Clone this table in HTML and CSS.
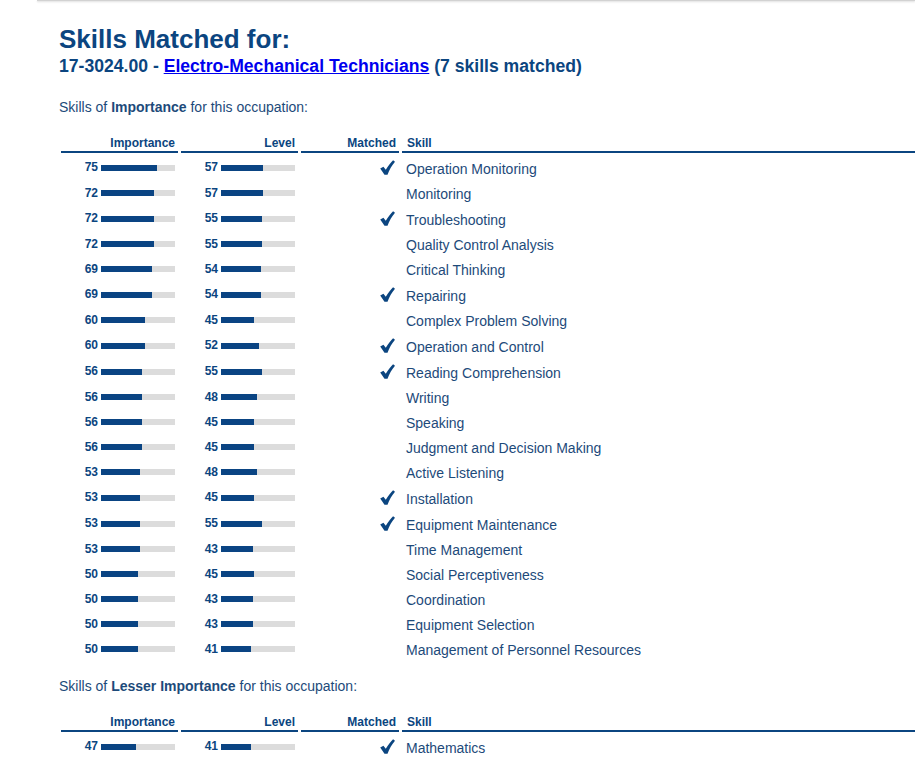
FILE: index.html
```html
<!DOCTYPE html>
<html>
<head>
<meta charset="utf-8">
<title>Skills Matched</title>
<link rel="stylesheet" href="styles.css">
</head>
<body>
<div class="topline"></div>
<div class="page">
  <h1 class="title">Skills Matched for:</h1>
  <div class="subtitle">17-3024.00 - <a href="#">Electro-Mechanical Technicians</a> (7 skills matched)</div>

  <p class="intro first">Skills of <b>Importance</b> for this occupation:</p>
  <table class="skills">
    <thead>
      <tr><th class="c-imp">Importance</th><th class="c-lvl">Level</th><th class="c-mat">Matched</th><th class="c-skill">Skill</th></tr>
    </thead>
    <tbody>
      <tr class="m"><td class="num">75<span class="bar"><span class="fill" style="width:75%"></span></span></td><td class="num">57<span class="bar"><span class="fill" style="width:57%"></span></span></td><td class="mat"><svg class="check" viewBox="0 0 14 14"><path d="M0.2 8 L3.2 6.2 L5.4 9.2 C7.6 5.6 9.9 2.6 12.2 0.2 L14 1.6 C11 5 8.7 9.2 7 13.8 L4.2 13.8 Z"/></svg></td><td class="skill">Operation Monitoring</td></tr>
      <tr><td class="num">72<span class="bar"><span class="fill" style="width:72%"></span></span></td><td class="num">57<span class="bar"><span class="fill" style="width:57%"></span></span></td><td class="mat"></td><td class="skill">Monitoring</td></tr>
      <tr class="m"><td class="num">72<span class="bar"><span class="fill" style="width:72%"></span></span></td><td class="num">55<span class="bar"><span class="fill" style="width:55%"></span></span></td><td class="mat"><svg class="check" viewBox="0 0 14 14"><path d="M0.2 8 L3.2 6.2 L5.4 9.2 C7.6 5.6 9.9 2.6 12.2 0.2 L14 1.6 C11 5 8.7 9.2 7 13.8 L4.2 13.8 Z"/></svg></td><td class="skill">Troubleshooting</td></tr>
      <tr><td class="num">72<span class="bar"><span class="fill" style="width:72%"></span></span></td><td class="num">55<span class="bar"><span class="fill" style="width:55%"></span></span></td><td class="mat"></td><td class="skill">Quality Control Analysis</td></tr>
      <tr><td class="num">69<span class="bar"><span class="fill" style="width:69%"></span></span></td><td class="num">54<span class="bar"><span class="fill" style="width:54%"></span></span></td><td class="mat"></td><td class="skill">Critical Thinking</td></tr>
      <tr class="m"><td class="num">69<span class="bar"><span class="fill" style="width:69%"></span></span></td><td class="num">54<span class="bar"><span class="fill" style="width:54%"></span></span></td><td class="mat"><svg class="check" viewBox="0 0 14 14"><path d="M0.2 8 L3.2 6.2 L5.4 9.2 C7.6 5.6 9.9 2.6 12.2 0.2 L14 1.6 C11 5 8.7 9.2 7 13.8 L4.2 13.8 Z"/></svg></td><td class="skill">Repairing</td></tr>
      <tr><td class="num">60<span class="bar"><span class="fill" style="width:60%"></span></span></td><td class="num">45<span class="bar"><span class="fill" style="width:45%"></span></span></td><td class="mat"></td><td class="skill">Complex Problem Solving</td></tr>
      <tr class="m"><td class="num">60<span class="bar"><span class="fill" style="width:60%"></span></span></td><td class="num">52<span class="bar"><span class="fill" style="width:52%"></span></span></td><td class="mat"><svg class="check" viewBox="0 0 14 14"><path d="M0.2 8 L3.2 6.2 L5.4 9.2 C7.6 5.6 9.9 2.6 12.2 0.2 L14 1.6 C11 5 8.7 9.2 7 13.8 L4.2 13.8 Z"/></svg></td><td class="skill">Operation and Control</td></tr>
      <tr class="m"><td class="num">56<span class="bar"><span class="fill" style="width:56%"></span></span></td><td class="num">55<span class="bar"><span class="fill" style="width:55%"></span></span></td><td class="mat"><svg class="check" viewBox="0 0 14 14"><path d="M0.2 8 L3.2 6.2 L5.4 9.2 C7.6 5.6 9.9 2.6 12.2 0.2 L14 1.6 C11 5 8.7 9.2 7 13.8 L4.2 13.8 Z"/></svg></td><td class="skill">Reading Comprehension</td></tr>
      <tr><td class="num">56<span class="bar"><span class="fill" style="width:56%"></span></span></td><td class="num">48<span class="bar"><span class="fill" style="width:48%"></span></span></td><td class="mat"></td><td class="skill">Writing</td></tr>
      <tr><td class="num">56<span class="bar"><span class="fill" style="width:56%"></span></span></td><td class="num">45<span class="bar"><span class="fill" style="width:45%"></span></span></td><td class="mat"></td><td class="skill">Speaking</td></tr>
      <tr><td class="num">56<span class="bar"><span class="fill" style="width:56%"></span></span></td><td class="num">45<span class="bar"><span class="fill" style="width:45%"></span></span></td><td class="mat"></td><td class="skill">Judgment and Decision Making</td></tr>
      <tr><td class="num">53<span class="bar"><span class="fill" style="width:53%"></span></span></td><td class="num">48<span class="bar"><span class="fill" style="width:48%"></span></span></td><td class="mat"></td><td class="skill">Active Listening</td></tr>
      <tr class="m"><td class="num">53<span class="bar"><span class="fill" style="width:53%"></span></span></td><td class="num">45<span class="bar"><span class="fill" style="width:45%"></span></span></td><td class="mat"><svg class="check" viewBox="0 0 14 14"><path d="M0.2 8 L3.2 6.2 L5.4 9.2 C7.6 5.6 9.9 2.6 12.2 0.2 L14 1.6 C11 5 8.7 9.2 7 13.8 L4.2 13.8 Z"/></svg></td><td class="skill">Installation</td></tr>
      <tr class="m"><td class="num">53<span class="bar"><span class="fill" style="width:53%"></span></span></td><td class="num">55<span class="bar"><span class="fill" style="width:55%"></span></span></td><td class="mat"><svg class="check" viewBox="0 0 14 14"><path d="M0.2 8 L3.2 6.2 L5.4 9.2 C7.6 5.6 9.9 2.6 12.2 0.2 L14 1.6 C11 5 8.7 9.2 7 13.8 L4.2 13.8 Z"/></svg></td><td class="skill">Equipment Maintenance</td></tr>
      <tr><td class="num">53<span class="bar"><span class="fill" style="width:53%"></span></span></td><td class="num">43<span class="bar"><span class="fill" style="width:43%"></span></span></td><td class="mat"></td><td class="skill">Time Management</td></tr>
      <tr><td class="num">50<span class="bar"><span class="fill" style="width:50%"></span></span></td><td class="num">45<span class="bar"><span class="fill" style="width:45%"></span></span></td><td class="mat"></td><td class="skill">Social Perceptiveness</td></tr>
      <tr><td class="num">50<span class="bar"><span class="fill" style="width:50%"></span></span></td><td class="num">43<span class="bar"><span class="fill" style="width:43%"></span></span></td><td class="mat"></td><td class="skill">Coordination</td></tr>
      <tr><td class="num">50<span class="bar"><span class="fill" style="width:50%"></span></span></td><td class="num">43<span class="bar"><span class="fill" style="width:43%"></span></span></td><td class="mat"></td><td class="skill">Equipment Selection</td></tr>
      <tr><td class="num">50<span class="bar"><span class="fill" style="width:50%"></span></span></td><td class="num">41<span class="bar"><span class="fill" style="width:41%"></span></span></td><td class="mat"></td><td class="skill">Management of Personnel Resources</td></tr>
    </tbody>
  </table>

  <p class="intro">Skills of <b>Lesser Importance</b> for this occupation:</p>
  <table class="skills">
    <thead>
      <tr><th class="c-imp">Importance</th><th class="c-lvl">Level</th><th class="c-mat">Matched</th><th class="c-skill">Skill</th></tr>
    </thead>
    <tbody>
      <tr class="m"><td class="num">47<span class="bar"><span class="fill" style="width:47%"></span></span></td><td class="num">41<span class="bar"><span class="fill" style="width:41%"></span></span></td><td class="mat"><svg class="check" viewBox="0 0 14 14"><path d="M0.2 8 L3.2 6.2 L5.4 9.2 C7.6 5.6 9.9 2.6 12.2 0.2 L14 1.6 C11 5 8.7 9.2 7 13.8 L4.2 13.8 Z"/></svg></td><td class="skill">Mathematics</td></tr>
    </tbody>
  </table>
</div>
</body>
</html>
```

FILE: styles.css
```css
html, body {
  margin: 0;
  padding: 0;
  background: #ffffff;
  overflow: hidden;
}

body {
  font-family: "Liberation Sans", Arial, sans-serif;
  color: #1d4a7a;
}

.topline {
  margin-left: 37px;
  height: 1px;
  background: #d2d2d2;
  box-shadow: 0 1px 2px rgba(0, 0, 0, 0.18);
}

.page {
  padding-left: 58px;
}

.title {
  margin: 23px 0 0 1px;
  font-size: 26px;
  line-height: 30px;
  font-weight: bold;
  color: #0b4580;
}

.subtitle {
  margin: 2px 0 0 1px;
  font-size: 17.6px;
  line-height: 20px;
  font-weight: bold;
  color: #0b4580;
}

.subtitle a {
  color: #0000ee;
  text-decoration: underline;
}

.intro {
  margin: 18px 0 0 1px;
  font-size: 14px;
  line-height: 16px;
  color: #1d4a7a;
}

.intro.first {
  margin-top: 23px;
}

.intro + .skills {
  margin-top: 17px;
}

.skills {
  border-collapse: separate;
  border-spacing: 3px 0;
  table-layout: fixed;
  width: 863px;
}

.skills th {
  box-sizing: border-box;
  font-size: 12px;
  line-height: 14px;
  font-weight: bold;
  color: #0b4580;
  padding: 4px 3px 1px 3px;
  border-bottom: 2px solid #0b4580;
  text-align: right;
  white-space: nowrap;
}

.skills th.c-imp,
.skills th.c-lvl {
  width: 117px;
}

.skills th.c-mat {
  width: 98px;
}

.skills th.c-skill {
  text-align: left;
  padding-left: 5px;
}

.skills tbody tr {
  height: 25px;
}

.skills tbody tr.m {
  height: 26px;
}

.skills td {
  padding: 2px 0 0 0;
  vertical-align: middle;
  white-space: nowrap;
}

.skills td.num {
  text-align: right;
  padding-right: 3px;
  font-size: 12px;
  line-height: 14px;
  font-weight: bold;
  color: #0b4580;
}

.bar {
  display: inline-block;
  vertical-align: middle;
  width: 74px;
  height: 6px;
  margin-left: 3px;
  background: #dcdcdc;
}

.fill {
  display: block;
  height: 100%;
  background: #0a4483;
}

.skills td.mat {
  text-align: right;
  padding-right: 4px;
  line-height: 14px;
}

.check {
  display: inline-block;
  vertical-align: middle;
  width: 15px;
  height: 15px;
  fill: #0b4580;
}

.skills td.skill {
  padding-top: 5px;
  padding-left: 4px;
  font-size: 14px;
  line-height: 16px;
  color: #1d4a7a;
}
```
